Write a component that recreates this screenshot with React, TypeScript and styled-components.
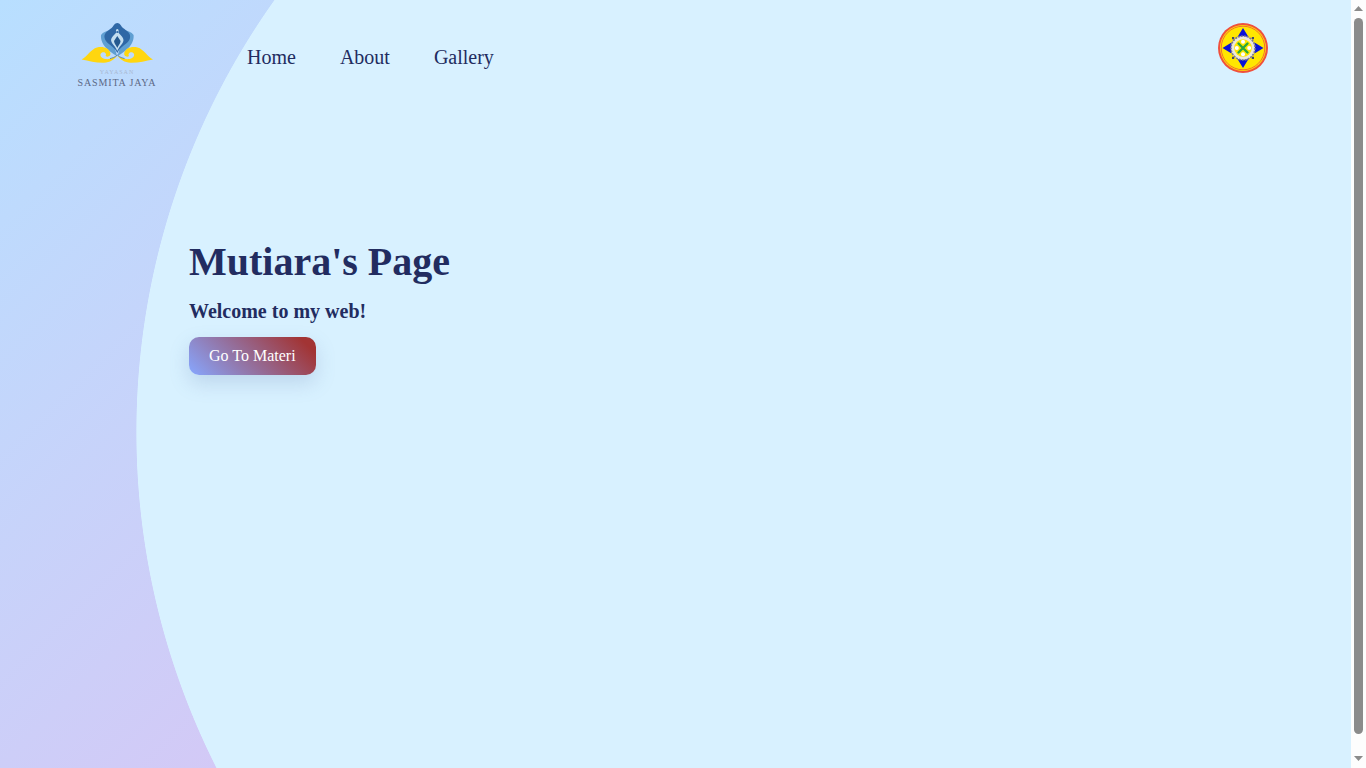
import React from "react";
import styled, { createGlobalStyle } from "styled-components";

const Global = createGlobalStyle`
  html, body { margin: 0; padding: 0; height: 100%; overflow: hidden; }
  #root { height: 100%; }
`;

const Viewport = styled.div`
  display: flex;
  width: 1366px;
  height: 768px;
  font-family: "Liberation Serif", "Times New Roman", serif;
  color: #222c60;
`;

const Page = styled.main`
  flex: 1;
  min-width: 0;
  background:
    radial-gradient(circle 745px at 881px 432px, #d8f1ff 99.9%, transparent 100%),
    linear-gradient(135deg, #b8dfff 0, #d3c9f6 700px);
`;

const Header = styled.header`
  box-sizing: border-box;
  height: 90px;
  display: flex;
  align-items: flex-start;
  padding: 20px 83px 0 77px;
`;

const Nav = styled.nav`
  display: flex;
  gap: 44px;
  margin-left: 90px;
  padding-top: 26px;
`;

const NavLink = styled.a`
  font-size: 20px;
  line-height: 23px;
  color: #222c60;
`;

const Crest = styled.svg`
  display: block;
  margin-left: auto;
  margin-top: 3px;
`;

const LogoBox = styled.div`
  width: 80px;
  display: flex;
  flex-direction: column;
  align-items: center;
`;

const LogoMark = styled.svg`
  display: block;
  filter: blur(0.35px);
`;

const LogoSmall = styled.span`
  font-family: "Liberation Serif", serif;
  font-size: 6px;
  line-height: 8px;
  letter-spacing: 1px;
  color: #a9b8d2;
  margin-top: 4px;
`;

const LogoName = styled.span`
  font-family: "Liberation Serif", serif;
  font-size: 10px;
  line-height: 12px;
  letter-spacing: 0.85px;
  color: #5b6886;
  white-space: nowrap;
  margin-top: 1px;
`;

const Hero = styled.section`
  padding: 149px 0 0 189px;
`;

const Title = styled.h1`
  margin: 0;
  font-size: 40px;
  line-height: 46px;
  font-weight: 700;
`;

const Subtitle = styled.h3`
  margin: 15px 0 0;
  font-size: 20px;
  line-height: 23px;
  font-weight: 700;
`;

const CtaButton = styled.a`
  display: inline-block;
  margin-top: 14px;
  padding: 10px 20px;
  font-size: 16px;
  line-height: 18px;
  color: #fff;
  border-radius: 10px;
  background: linear-gradient(45deg, #87a7ff 0%, #a23434 90%);
  box-shadow: 0 8px 20px rgba(90, 120, 170, 0.22);
`;

const ScrollTrack = styled.aside`
  width: 15px;
  flex: none;
  background: #fdfdfd;
  display: flex;
  flex-direction: column;
  align-items: center;
`;

const ScrollArrow = styled.svg<{ $end?: boolean }>`
  display: block;
  flex: none;
  margin-top: ${(p) => (p.$end ? "auto" : "0")};
`;

const ScrollThumb = styled.div`
  width: 9px;
  height: 716px;
  margin-top: 3px;
  border-radius: 4.5px;
  background: #8b8b8b;
`;

const Logo = () => (
  <LogoBox>
    <LogoMark width="80" height="44" viewBox="0 0 80 44">
      <path d="M24 15 C26 12 30 11 33 10 L40 36 C35 33 23 26 24 15 Z" fill="#5f9fd2" />
      <path d="M56.6 15 C54.6 12 50.6 11 47.6 10 L40.6 36 C45.6 33 57.6 26 56.6 15 Z" fill="#5f9fd2" />
      <path d="M40.3 3 C43 3 44 6 46 8 C50 11 54 13 53 18 C52 23 46 25 42 30 L40.3 33 L38.6 30 C34.6 25 28.6 23 27.6 18 C26.6 13 30.6 11 34.6 8 C36.6 6 37.6 3 40.3 3 Z" fill="#2f68a6" />
      <path d="M40.3 9 C41.6 9 42 11 41.4 12.6 C44 16 47 18 46.4 21 C45.8 24 43 25.4 41.6 28.6 L40.3 31 L39 28.6 C37.6 25.4 34.8 24 34.2 21 C33.6 18 36.6 16 39.2 12.6 C38.6 11 39 9 40.3 9 Z" fill="#c3def0" />
      <path d="M40.3 16 L43.6 21 C43.2 24 41.6 25 40.3 28 C39 25 37.4 24 37 21 Z" fill="#24598f" />
      <circle cx="40.3" cy="12" r="1.1" fill="#2f68a6" />
      <path d="M4.6 39.4 C10 37 14 29 20 27.5 C26 26 32 28 33.4 33 C34 36 30.6 37.6 28.6 36 C30 33.6 27.6 31.4 25 32.6 C22 34 23.4 38.4 28 39 C33 39.6 37 38 40.3 35.6 C37.4 39.6 33 42.6 27 42.8 C19 43 12 40.6 4.6 39.4 Z" fill="#ffd60f" />
      <path d="M76 39.4 C70.6 37 66.6 29 60.6 27.5 C54.6 26 48.6 28 47.2 33 C46.6 36 50 37.6 52 36 C50.6 33.6 53 31.4 55.6 32.6 C58.6 34 57.2 38.4 52.6 39 C47.6 39.6 43.6 38 40.3 35.6 C43.2 39.6 47.6 42.6 53.6 42.8 C61.6 43 68.6 40.6 76 39.4 Z" fill="#ffd60f" />
      <path d="M33 38.6 C35 38 38 37.4 40.3 35 C42.6 37.4 45.6 38 47.6 38.6" fill="none" stroke="#2f68a6" strokeWidth="0.7" />
    </LogoMark>
    <LogoSmall>YAYASAN</LogoSmall>
    <LogoName>SASMITA JAYA</LogoName>
  </LogoBox>
);

const SchoolCrest = () => (
  <Crest width="50" height="50" viewBox="0 0 50 50">
    <circle cx="25" cy="25" r="25" fill="#f0503c" />
    <circle cx="25" cy="25" r="23" fill="#ffe600" />
    <circle cx="25" cy="25" r="21.8" fill="none" stroke="#f0503c" strokeWidth="0.8" />
    <path d="M25 5 L30.5 14 H19.5 Z M25 45 L30.5 36 H19.5 Z M4.5 25 L13.5 19.5 V30.5 Z M45.5 25 L36.5 19.5 V30.5 Z" fill="#0a12d8" />
    <path d="M14 14 h2.2 v2.2 h-2.2 Z M33.8 14 h2.2 v2.2 h-2.2 Z M14 33.8 h2.2 v2.2 h-2.2 Z M33.8 33.8 h2.2 v2.2 h-2.2 Z" fill="#44446c" />
    <circle cx="25" cy="25" r="12" fill="#ece8dc" stroke="#76769a" strokeWidth="1.6" strokeDasharray="2 1" />
    <circle cx="25" cy="25" r="8.8" fill="#ffe600" />
    <path d="M20.5 20.5 L29.5 29.5 M29.5 20.5 L20.5 29.5" stroke="#2aa83a" strokeWidth="2.4" strokeLinecap="round" />
    <circle cx="25" cy="18.8" r="2" fill="#fff" />
    <circle cx="25" cy="31.2" r="2" fill="#fff" />
    <circle cx="18.8" cy="25" r="2" fill="#fff" />
    <circle cx="31.2" cy="25" r="2" fill="#fff" />
  </Crest>
);

export default function App() {
  return (
    <Viewport>
      <Global />
      <Page>
        <Header>
          <Logo />
          <Nav>
            <NavLink>Home</NavLink>
            <NavLink>About</NavLink>
            <NavLink>Gallery</NavLink>
          </Nav>
          <SchoolCrest />
        </Header>
        <Hero>
          <Title>Mutiara's Page</Title>
          <Subtitle>Welcome to my web!</Subtitle>
          <CtaButton>Go To Materi</CtaButton>
        </Hero>
      </Page>
      <ScrollTrack>
        <ScrollArrow width="15" height="15" viewBox="0 0 15 15"><path d="M7.5 6 L12 11 H3 Z" fill="#8b8b8b" /></ScrollArrow>
        <ScrollThumb />
        <ScrollArrow $end width="15" height="15" viewBox="0 0 15 15"><path d="M7.5 8 L12 3 H3 Z" fill="#8b8b8b" /></ScrollArrow>
      </ScrollTrack>
    </Viewport>
  );
}
